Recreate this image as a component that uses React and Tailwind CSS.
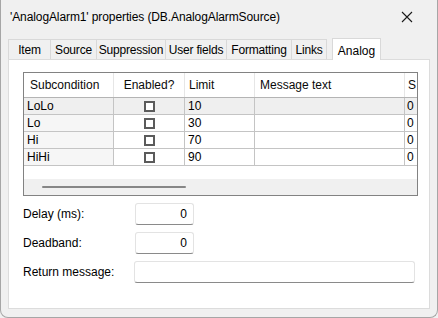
import React from 'react';

const tabs = [
  { label: 'Item', w: 'w-[43px]' },
  { label: 'Source', w: 'w-[47px]' },
  { label: 'Suppression', w: 'w-[70px]' },
  { label: 'User fields', w: 'w-[62px]' },
  { label: 'Formatting', w: 'w-[66px]' },
  { label: 'Links', w: 'w-[36px]' },
];

const rows = [
  { name: 'LoLo', limit: '10' },
  { name: 'Lo', limit: '30' },
  { name: 'Hi', limit: '70' },
  { name: 'HiHi', limit: '90' },
];

const Checkbox = () => (
  <div className="w-[11px] h-[11px] border-2 border-[#5b5b5b] bg-white" />
);

const App = () => {
  return (
    <div className="w-[438px] h-[318px] bg-[#f0f0f0] overflow-hidden">
      <div className="w-[438px] h-[318px] flex flex-col border-l border-r border-b border-[#a6a6a6] rounded-b-[8px] text-[12px] text-black font-['Liberation_Sans',Arial,sans-serif]">
        {/* barra de titulo */}
        <div className="h-[33px] flex items-center justify-between pl-[9px] pr-[24px]">
          <span className="pt-[1px] tracking-[-0.1px]">'AnalogAlarm1' properties (DB.AnalogAlarmSource)</span>
          <svg width="12" height="12" viewBox="0 0 12 12" className="mt-[1px]">
            <path d="M1 1 L11 11 M11 1 L1 11" stroke="#1a1a1a" strokeWidth="1.1" />
          </svg>
        </div>

        {/* pestañas */}
        <div className="flex items-end pl-[7px] h-[26px]">
          {tabs.map((t) => (
            <div
              key={t.label}
              className={`${t.w} h-[20px] flex items-center justify-center border border-b-0 border-[#d9d9d9] -ml-px first:ml-0 bg-[#f0f0f0] tracking-[-0.2px]`}
            >
              {t.label}
            </div>
          ))}
          <div className="w-[49px] h-[22px] flex items-start justify-center pt-[3px] border border-b-0 border-[#d9d9d9] bg-white ml-[5px] relative z-10 -mb-px">
            Analog
          </div>
        </div>

        {/* panel */}
        <div className="ml-[7px] w-[422px] h-[250px] bg-white border border-[#dcdcdc] pt-[12px] px-[14px] flex flex-col">
          {/* grid */}
          <div className="w-[395px] h-[124px] border border-[#828282] flex flex-col text-[12px]">
            <div className="flex h-[25px] border-b border-[#b4b4b4] text-[#0a0a0a]">
              <div className="w-[90px] flex items-center pl-[6px] border-r border-[#e6e6e6]">Subcondition</div>
              <div className="w-[71px] flex items-center justify-center border-r border-[#e6e6e6]">Enabled?</div>
              <div className="w-[70px] flex items-center pl-[4px] border-r border-[#e6e6e6]">Limit</div>
              <div className="w-[150px] flex items-center pl-[5px] border-r border-[#e6e6e6]">Message text</div>
              <div className="flex-1 flex items-center pl-[3px] overflow-hidden">S</div>
            </div>
            {rows.map((r, i) => {
              const sel = i === 0;
              return (
                <div key={r.name} className={`flex h-[17px] border-b border-[#c4c4c4] ${sel ? 'bg-[#efefef]' : 'bg-white'}`}>
                  <div className={`w-[90px] flex items-center pl-[3px] border-r border-[#c4c4c4] ${sel ? '' : 'bg-[#f6f6f6]'}`}>{r.name}</div>
                  <div className="w-[71px] flex items-center justify-center border-r border-[#c4c4c4]">
                    <Checkbox />
                  </div>
                  <div className="w-[70px] flex items-center pl-[3px] border-r border-[#c4c4c4]">{r.limit}</div>
                  <div className="w-[150px] border-r border-[#c4c4c4]" />
                  <div className="flex-1 flex items-center pl-[2px] overflow-hidden">0</div>
                </div>
              );
            })}
            <div className="h-[13px]" />
            <div className="flex-1 bg-[#f0f0f0] flex items-center pl-[18px]">
              <div className="w-[144px] h-[2px] bg-[#868686] rounded-full" />
            </div>
          </div>

          {/* campos */}
          <div className="mt-[7px] flex flex-col gap-[7px]">
            <div className="flex items-center h-[22px]">
              <span className="w-[112px]">Delay (ms):</span>
              <div className="w-[59px] h-[22px] border border-[#e3e3e3] border-b-[#8a8a8a] rounded-[3px] flex items-center justify-end pr-[6px]">0</div>
            </div>
            <div className="flex items-center h-[22px]">
              <span className="w-[112px]">Deadband:</span>
              <div className="w-[59px] h-[22px] border border-[#e3e3e3] border-b-[#8a8a8a] rounded-[3px] flex items-center justify-end pr-[6px]">0</div>
            </div>
            <div className="flex items-center h-[22px]">
              <span className="w-[112px]">Return message:</span>
              <div className="w-[282px] h-[22px] border border-[#e3e3e3] border-b-[#8a8a8a] rounded-[3px]" />
            </div>
          </div>
        </div>
      </div>
    </div>
  );
};

export default App;
